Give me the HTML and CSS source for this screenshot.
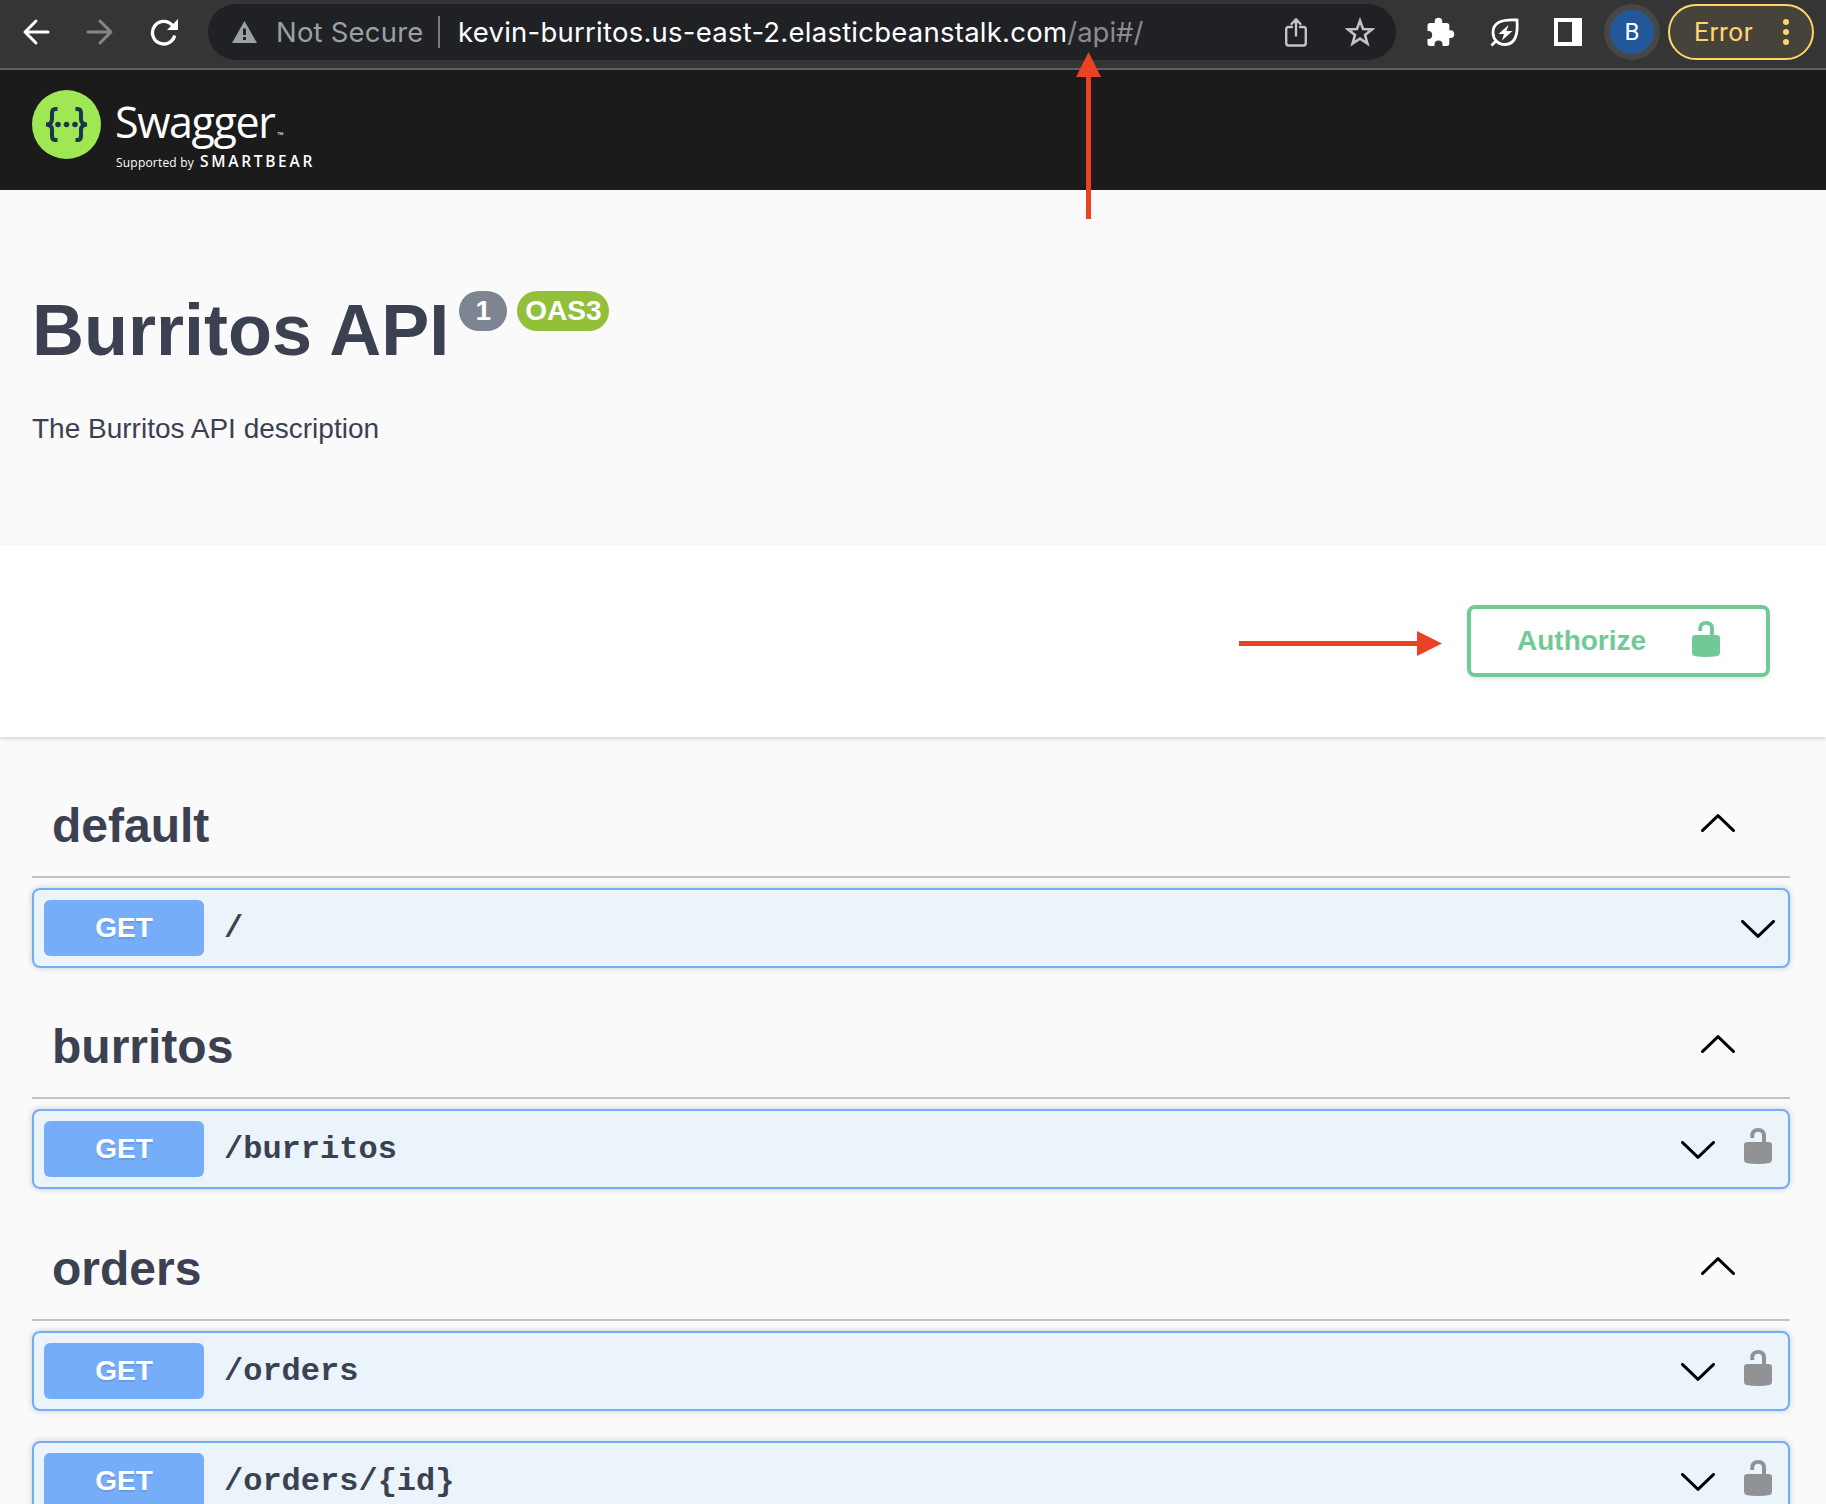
FILE: index.html
```html
<!DOCTYPE html>
<html lang="en">
<head>
<meta charset="utf-8">
<title>Swagger UI</title>
<link rel="stylesheet" href="styles.css">
</head>
<body>
<svg class="defs" width="0" height="0" aria-hidden="true">
  <symbol id="lock-open" viewBox="0 0 28 36"><path d="M3.500 14H18V7.500C18 5 16.600 3.800 14.200 3.800S10.200 5 10.200 7.500V10H6.300V7.500C6.300 2.900 9.500 0 14.200 0S22 2.900 22 7.500V14H24.500Q28 14 28 17V31.500Q28 34.300 25.500 35Q21 36 14 36T2.500 35Q0 34.300 0 31.500V17Q0 14 3.500 14Z"/></symbol>
  <symbol id="chev-up" viewBox="0 0 34 18"><path d="M1.400 16.600 17 1.600 32.600 16.600" fill="none" stroke="#000" stroke-width="2.900" stroke-linecap="round" stroke-linejoin="round"/></symbol>
  <symbol id="chev-down" viewBox="0 0 34 18"><path d="M1.400 1.400 17 16.400 32.600 1.400" fill="none" stroke="#000" stroke-width="2.900" stroke-linecap="round" stroke-linejoin="round"/></symbol>
</svg>
<header class="toolbar">
  <nav class="nav">
    <svg width="28" height="28" viewBox="0 0 28 28"><path d="M26 14H3M14 3 3 14 14 25" fill="none" stroke="#fff" stroke-width="3" stroke-linecap="round" stroke-linejoin="round"/></svg>
    <svg width="28" height="28" viewBox="0 0 28 28"><path d="M2 14H25M14 3 25 14 14 25" fill="none" stroke="#868686" stroke-width="3" stroke-linecap="round" stroke-linejoin="round"/></svg>
    <svg width="28" height="28" viewBox="0 0 28 28"><path d="M22.500 7.500A11.300 11.300 0 1 0 24.700 17.500" fill="none" stroke="#fff" stroke-width="3.300"/><path d="M28 1V12H17Z" fill="#fff"/></svg>
  </nav>
  <div class="omnibox">
    <svg width="25" height="22" viewBox="0 0 25 22"><path d="M12.500 0 25 22H0Z" fill="#9aa0a6"/><path d="M11 7.500h3v6.500h-3zM11 16h3v3h-3z" fill="#202124"/></svg>
    <span class="insecure">Not Secure</span>
    <i class="sep"></i>
    <span class="url">kevin-burritos.us-east-2.elasticbeanstalk.com<span class="url-path">/api#/</span></span>
    <svg class="share" width="22" height="30" viewBox="0 0 22 30"><g fill="none" stroke="#c4c4c4" stroke-width="2.400" stroke-linecap="round" stroke-linejoin="round"><path d="M7 10H3.500Q1.200 10 1.200 12.500V26Q1.200 28.500 3.500 28.500H18.500Q20.800 28.500 20.800 26V12.500Q20.800 10 18.500 10H15M11 18.500V2.500M6.500 7 11 2.200 15.500 7"/></g></svg>
    <svg class="star" width="30" height="30" viewBox="0 0 30 30"><path d="m15 3.800 3.100 8.300 8.800.4-6.900 5.400 2.400 8.600L15 21.600l-7.400 4.900L10 17.900 3.100 12.500l8.800-.4Z" fill="none" stroke="#c4c4c4" stroke-width="2.600"/></svg>
  </div>
  <div class="extensions">
    <svg width="30" height="30" viewBox="0 0 30 30"><path d="M4 6H8.700V4.500A3.700 3.700 0 0 1 16.200 4.500V6H20.500Q23.300 6 23.300 8.500V13.300H25A3.900 3.900 0 0 1 25 21H23.300V26.500Q23.300 29 20.500 29H16.500V27.500A4 4 0 0 0 8.500 27.500V29H4Q1.500 29 1.500 26.500V22H3A4.100 4.100 0 0 0 3 14H1.500V8.500Q1.500 6 4 6Z" fill="#fff"/></svg>
    <svg width="30" height="30" viewBox="0 0 30 30"><path d="M27 3C28 16 26 27.500 15 27.500C7.500 27.500 3 22 3 15.500C3 6 11 2 27 3ZM1.500 28.500 6.500 23.500" fill="none" stroke="#fff" stroke-width="2.800"/><path d="M18.500 8 8.500 17H14L12 23.500 22.500 14H16.500Z" fill="#fff"/></svg>
    <svg width="28" height="28" viewBox="0 0 28 28"><path d="M0 0H28V28H0ZM4 4V24H18V4Z" fill="#fff" fill-rule="evenodd"/></svg>
  </div>
  <div class="avatar"><span>B</span></div>
  <div class="error"><span>Error</span><svg width="6" height="26" viewBox="0 0 6 26"><g fill="#fdd66d"><circle cx="3" cy="3" r="3"/><circle cx="3" cy="13" r="3"/><circle cx="3" cy="23" r="3"/></g></svg></div>
</header>
<div class="topbar">
  <svg class="mark" width="69" height="69" viewBox="0 0 69 69"><circle cx="34.500" cy="34.500" r="34.500" fill="#9fe854"/><g fill="none" stroke="#1d3647" stroke-width="4"><path d="M25.500 19H23.500Q20 19 20 23V29Q20 34.500 14 34.500Q20 34.500 20 40V46Q20 50 23.500 50H25.500M43.500 19H45.500Q49 19 49 23V29Q49 34.500 55 34.500Q49 34.500 49 40V46Q49 50 45.500 50H43.500"/></g><g fill="#1d3647"><circle cx="26" cy="34.500" r="2.800"/><circle cx="34.500" cy="34.500" r="2.800"/><circle cx="43" cy="34.500" r="2.800"/></g></svg>
  <div class="brand">
    <div class="word">Swagger<small>™</small></div>
    <div class="support"><span>Supported by</span><b>SMARTBEAR</b></div>
  </div>
</div>
<section class="info">
  <h1>Burritos API</h1><span class="badge version">1</span><span class="badge oas">OAS3</span>
  <p>The Burritos API description</p>
</section>
<section class="scheme">
  <button class="authorize"><span>Authorize</span><svg width="28" height="36"><use href="#lock-open"/></svg></button>
</section>
<main class="tags">
  <section class="tag">
    <h3>default<svg width="34" height="18"><use href="#chev-up"/></svg></h3>
    <div class="op"><span class="method">GET</span><span class="path">/</span><svg width="34" height="18"><use href="#chev-down"/></svg></div>
  </section>
  <section class="tag">
    <h3>burritos<svg width="34" height="18"><use href="#chev-up"/></svg></h3>
    <div class="op"><span class="method">GET</span><span class="path">/burritos</span><svg width="34" height="18"><use href="#chev-down"/></svg><svg class="lock" width="28" height="36"><use href="#lock-open"/></svg></div>
  </section>
  <section class="tag">
    <h3>orders<svg width="34" height="18"><use href="#chev-up"/></svg></h3>
    <div class="op"><span class="method">GET</span><span class="path">/orders</span><svg width="34" height="18"><use href="#chev-down"/></svg><svg class="lock" width="28" height="36"><use href="#lock-open"/></svg></div>
    <div class="op"><span class="method">GET</span><span class="path">/orders/{id}</span><svg width="34" height="18"><use href="#chev-down"/></svg><svg class="lock" width="28" height="36"><use href="#lock-open"/></svg></div>
  </section>
</main>
<svg class="pointer pointer-url" width="25" height="167" viewBox="0 0 25 167"><path d="M12.500 0 25 25H15V167H10V25H0Z"/></svg>
<svg class="pointer pointer-auth" width="203" height="25" viewBox="0 0 203 25"><path d="M203 12.500 178 25V15H0V10H178V0Z"/></svg>
</body>
</html>
```
FILE: styles.css
```css
* { box-sizing: border-box; }
body {
  margin: 0;
  height: 1504px;
  overflow: hidden;
  position: relative;
  background: #fafafa;
  color: #3b4151;
  font-family: "Liberation Sans", Arial, sans-serif;
}
svg { display: block; flex: none; }
.defs { position: absolute; }

.toolbar {
  height: 70px;
  padding: 4px 12px 8px 22px;
  display: flex;
  background: #353535;
  border-bottom: 2px solid #5f5f5f;
}
.nav { display: flex; align-items: center; gap: 36px; width: 186px; flex: none; }
.omnibox {
  width: 1188px;
  height: 56px;
  flex: none;
  display: flex;
  align-items: center;
  padding: 0 21px 0 24px;
  border-radius: 28px;
  background: #202124;
  font: 27.5px/56px Inter, sans-serif;
  white-space: nowrap;
}
.insecure { width: 162px; margin-left: 19px; color: #9aa0a6; letter-spacing: 0.2px; }
.sep { width: 2px; height: 32px; background: #77797c; }
.url { margin-left: 18px; color: #fff; letter-spacing: 0.24px; }
.url-path { color: #8c8c8c; letter-spacing: 0; }
.share { margin-left: auto; margin-right: 38px; }
.extensions { display: flex; align-items: center; gap: 34px; margin-left: 30px; }
.avatar {
  width: 56px;
  height: 56px;
  margin-left: 22px;
  padding: 6px;
  border-radius: 50%;
  background: #464646;
}
.avatar span {
  display: block;
  height: 44px;
  border-radius: 50%;
  background: #225799;
  color: #fff;
  font: 24px/45px Roboto, sans-serif;
  text-align: center;
}
.error {
  width: 146px;
  height: 56px;
  margin-left: 8px;
  padding: 0 23px 0 24px;
  display: flex;
  align-items: center;
  justify-content: space-between;
  border: 2px solid #fdd66d;
  border-radius: 28px;
  background: #47433a;
  color: #fdd66d;
  font: 26px/57px Roboto, sans-serif;
  letter-spacing: 0.7px;
}

.topbar { height: 120px; padding: 20px 32px; display: flex; background: #1b1b1b; color: #fff; }
.brand { margin-left: 14px; font-family: "Open Sans", sans-serif; white-space: nowrap; }
.word { height: 63px; font-size: 43px; line-height: 64px; font-weight: 400; letter-spacing: -1.4px; }
.word small { font-size: 8px; letter-spacing: 0; margin-left: 3px; }
.support { display: flex; align-items: baseline; margin-left: 1px; line-height: 16px; }
.support span { width: 84px; font-size: 12px; letter-spacing: 0.2px; }
.support b { font-size: 15.500px; font-weight: 600; letter-spacing: 2.7px; }

.info { height: 355px; padding: 98px 32px 0; display: flex; flex-wrap: wrap; align-content: flex-start; }
h1 { margin: 0 10px 0 0; font-size: 72px; line-height: 84px; white-space: nowrap; }
.badge {
  height: 40px;
  margin: 3px 10px 0 0;
  padding: 0 7px;
  border-radius: 20px;
  color: #fff;
  font-size: 28px;
  line-height: 40px;
  font-weight: bold;
  text-align: center;
}
.version { width: 48px; background: #7d8492; }
.oas { width: 92px; background: #93c03b; }
.info p { width: 100%; margin: 41px 0 0; font-size: 28px; line-height: 32px; }

.scheme {
  height: 192px;
  padding: 0 56px;
  display: flex;
  align-items: center;
  justify-content: flex-end;
  background: #fff;
  box-shadow: 0 2px 4px rgba(0, 0, 0, 0.15);
}
.authorize {
  width: 303px;
  height: 72px;
  padding: 0 46px;
  display: flex;
  align-items: center;
  justify-content: space-between;
  border: 4px solid #70ca95;
  border-radius: 8px;
  background: transparent;
  box-shadow: 0 2px 4px rgba(0, 0, 0, 0.1);
  color: #70ca95;
  font: bold 28px "Liberation Sans", Arial, sans-serif;
}
.authorize svg { fill: #70ca95; margin-bottom: 4px; }

.tags { padding: 21px 36px 0 32px; }
.tag { margin-bottom: 11px; }
.tag:nth-child(2) { margin-bottom: 12px; }
h3 {
  height: 120px;
  margin: 0 0 10px;
  padding: 17px 55px 0 20px;
  display: flex;
  align-items: center;
  justify-content: space-between;
  border-bottom: 2px solid #c1c2c8;
  font-size: 48px;
  line-height: 56px;
}
h3 svg { margin-bottom: 6px; }
.op {
  height: 80px;
  margin-bottom: 30px;
  padding: 0 13px 0 10px;
  display: flex;
  align-items: center;
  border: 2px solid #72adf9;
  border-radius: 8px;
  background: #ebf3fb;
  box-shadow: 0 0 6px rgba(0, 0, 0, 0.19);
}
.op:last-child { margin-bottom: 0; }
.method {
  width: 160px;
  height: 56px;
  border-radius: 6px;
  background: #75adf9;
  color: #fff;
  font-size: 28px;
  line-height: 56px;
  font-weight: bold;
  text-align: center;
  text-shadow: 0 2px 0 rgba(0, 0, 0, 0.1);
}
.path {
  flex: 1;
  padding: 2px 0 0 20px;
  font: bold 32px/36px "Liberation Mono", "Courier New", monospace;
}
.op svg { margin-top: 2px; }
.op .lock { margin: 0 3px 7px 29px; fill: #909296; }

/* Callout arrows drawn over the page */
.pointer { position: absolute; fill: #eb4226; }
.pointer-url { left: 1076px; top: 52px; }
.pointer-auth { left: 1239px; top: 631px; }
```
